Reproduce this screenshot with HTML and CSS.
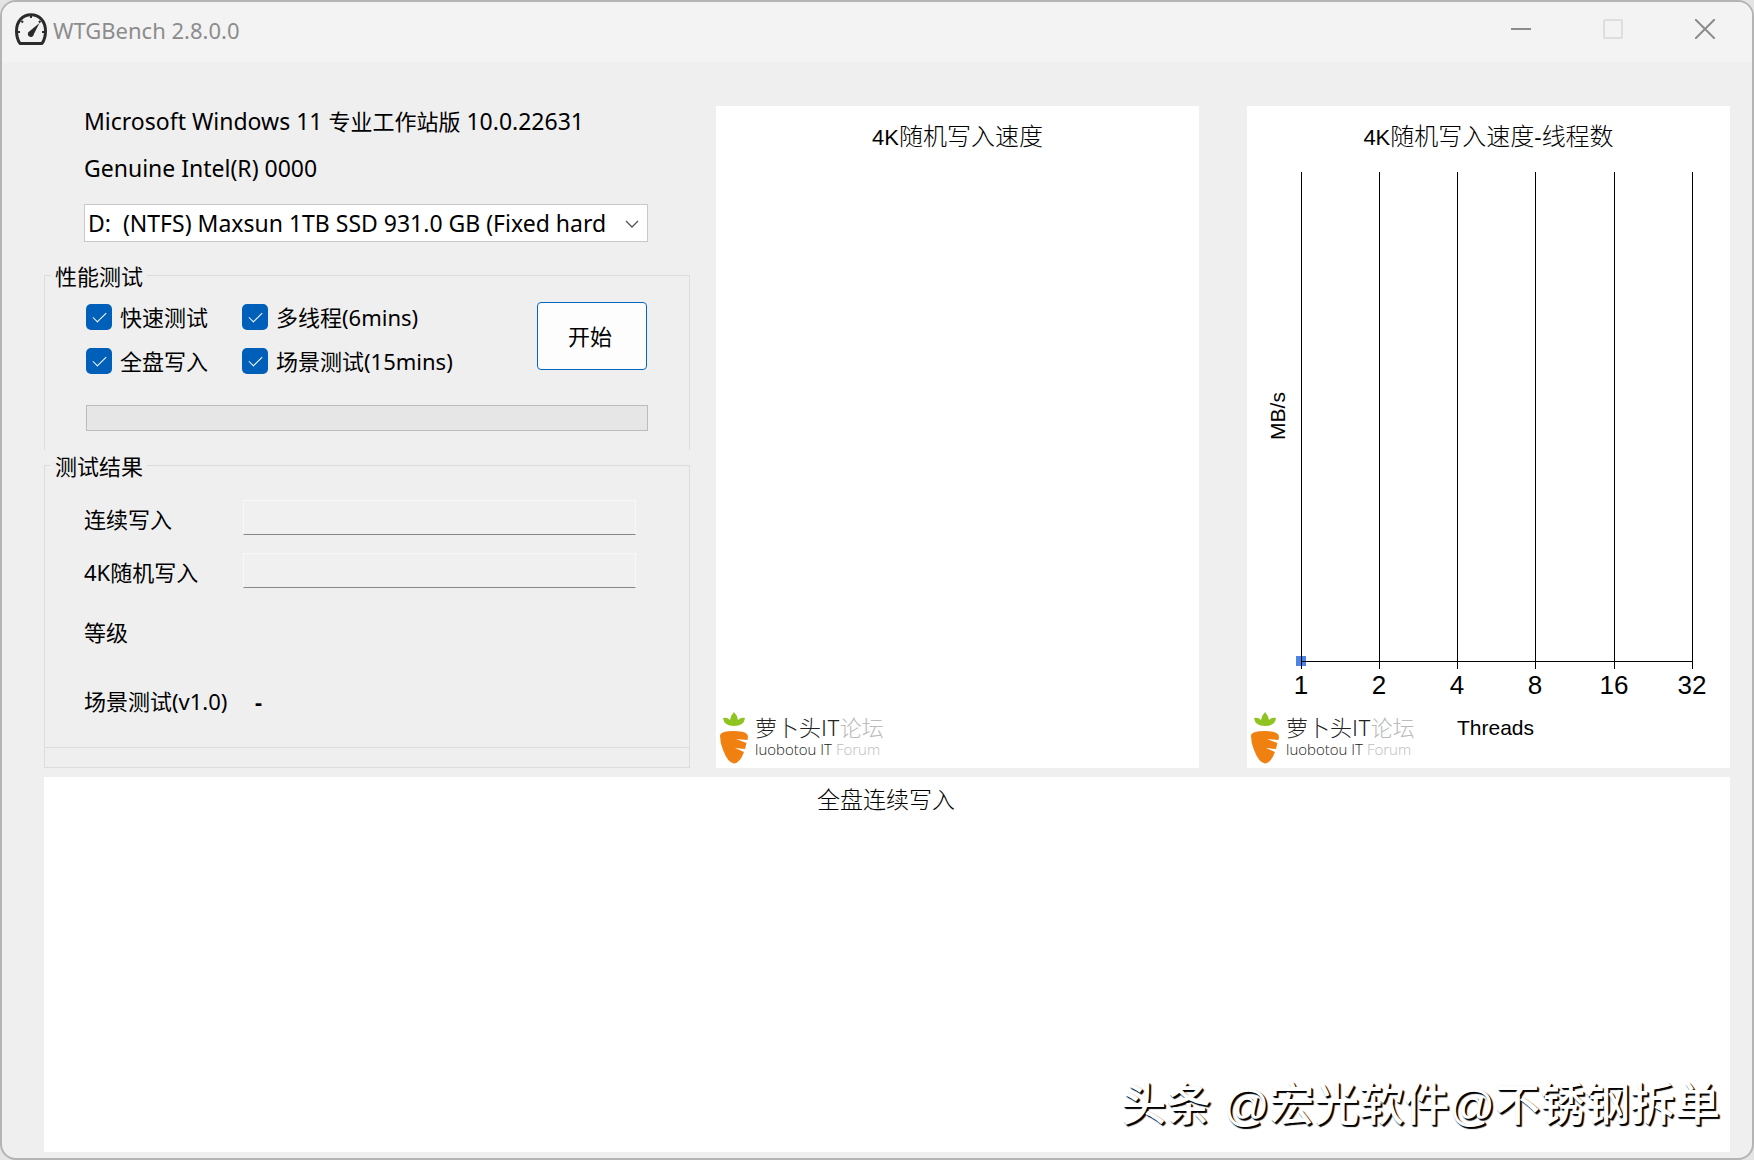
FILE: index.html
```html
<!DOCTYPE html>
<html lang="zh-CN">
<head>
<meta charset="utf-8">
<title>WTGBench 2.8.0.0</title>
<link rel="stylesheet" href="styles.css">
</head>
<body>
<div class="window">
  <header class="titlebar">
    <svg class="app-icon" viewBox="0 0 32 34" aria-hidden="true">
      <path d="M5 30.500C2.500 27 1.500 23 1.500 18C1.500 8.500 7.500 1.800 16 1.800S30.500 8.500 30.500 18C30.500 23 29.500 27 27 30.500Z" fill="none" stroke="#2b2b2b" stroke-width="3" stroke-linejoin="round"/>
      <path d="M16 3v2M6.500 8l1.500 1.500M25.500 8l-1.500 1.500M3 19h2M27 19h2" stroke="#2b2b2b" stroke-width="2"/>
      <path d="M24.500 10L18.800 21.300A3 3 0 1 1 14.200 18.500Z" fill="#2b2b2b"/>
    </svg>
    <h1 class="app-title">WTGBench 2.8.0.0</h1>
    <div class="window-buttons">
      <button class="window-button" aria-label="最小化"><svg viewBox="0 0 20 20"><path d="M0 10h20" stroke="#8c8c8c" stroke-width="2"/></svg></button>
      <button class="window-button" aria-label="最大化" disabled><svg viewBox="0 0 20 20"><rect x="1" y="1" width="18" height="18" rx="1" fill="none" stroke="#dedede" stroke-width="2"/></svg></button>
      <button class="window-button" aria-label="关闭"><svg viewBox="0 0 20 20"><path d="M0 0L20 20M20 0L0 20" stroke="#8c8c8c" stroke-width="2"/></svg></button>
    </div>
  </header>

  <main class="content">
    <div class="top">
      <section class="controls">
        <p class="info">Microsoft Windows 11 <span class="edition">专业工作站版</span> 10.0.22631</p>
        <p class="info">Genuine Intel(R) 0000</p>
        <div class="drive">
          <select class="drive-select" aria-label="磁盘">
            <option>D:&nbsp; (NTFS) Maxsun 1TB SSD 931.0 GB (Fixed hard</option>
          </select>
          <svg class="drive-arrow" viewBox="0 0 14 8" aria-hidden="true"><path d="M1 1l6 6l6-6" fill="none" stroke="#555" stroke-width="1.300"/></svg>
        </div>

        <fieldset class="group group-tests">
          <legend>性能测试</legend>
          <div class="group-body">
            <div class="tests">
              <div class="checks">
                <label class="check"><input type="checkbox" checked>快速测试</label>
                <label class="check"><input type="checkbox" checked>多线程(6mins)</label>
                <label class="check"><input type="checkbox" checked>全盘写入</label>
                <label class="check"><input type="checkbox" checked>场景测试(15mins)</label>
              </div>
              <button class="start">开始</button>
            </div>
            <div class="progress" role="progressbar" aria-label="进度" aria-valuenow="0"></div>
          </div>
        </fieldset>

        <fieldset class="group">
          <legend>测试结果</legend>
          <div class="results">
            <div class="result">
              <label for="seq">连续写入</label>
              <input class="field" id="seq" type="text" readonly>
            </div>
            <div class="result">
              <label for="rnd">4K随机写入</label>
              <input class="field" id="rnd" type="text" readonly>
            </div>
            <div class="result result-level"><span>等级</span></div>
            <div class="result result-scene"><span>场景测试(v1.0)</span><span class="score">-</span></div>
          </div>
          <div class="group-foot"></div>
        </fieldset>
      </section>

      <section class="chart">
        <h2 class="chart-title"><span class="latin">4K</span>随机写入速度</h2>
        <div class="chart-foot">
          <div class="brand">
            <svg class="carrot" viewBox="0 0 28 52" aria-hidden="true">
              <path d="M3 6Q7 5 10 8Q11 3 14 0Q17 3 18 8Q21 5 25 6Q24 14 14 14Q4 14 3 6Z" fill="#8fc31f"/>
              <path d="M0 24Q0 19 14 19Q28 19 28 25L27.500 28L16 27L26.500 31L25 37L15 36L24 40Q20 51 14 51.500Q8 51 3 38Q0 31 0 24Z" fill="#f08010"/>
            </svg>
            <div class="brand-text">
              <div class="brand-name">萝卜头IT<span>论坛</span></div>
              <div class="brand-sub">luobotou IT <span>Forum</span></div>
            </div>
          </div>
        </div>
      </section>

      <section class="chart">
        <h2 class="chart-title"><span class="latin">4K</span>随机写入速度<span class="latin">-</span>线程数</h2>
        <svg class="plot" viewBox="0 0 483 540" role="img" aria-label="4K随机写入速度-线程数">
          <rect x="49" y="492" width="10" height="10" fill="#4a86e8"/>
          <path d="M54.500 8V505M132.500 8V505M210.500 8V505M288.500 8V505M367.500 8V505M445.500 8V505M54 497.500H446" stroke="#000" fill="none"/>
          <g class="ticks">
            <text x="54" y="530">1</text>
            <text x="132" y="530">2</text>
            <text x="210" y="530">4</text>
            <text x="288" y="530">8</text>
            <text x="367" y="530">16</text>
            <text x="445" y="530">32</text>
          </g>
          <text class="axis" transform="translate(38 252) rotate(-90)">MB/s</text>
        </svg>
        <div class="chart-foot">
          <div class="brand">
            <svg class="carrot" viewBox="0 0 28 52" aria-hidden="true">
              <path d="M3 6Q7 5 10 8Q11 3 14 0Q17 3 18 8Q21 5 25 6Q24 14 14 14Q4 14 3 6Z" fill="#8fc31f"/>
              <path d="M0 24Q0 19 14 19Q28 19 28 25L27.500 28L16 27L26.500 31L25 37L15 36L24 40Q20 51 14 51.500Q8 51 3 38Q0 31 0 24Z" fill="#f08010"/>
            </svg>
            <div class="brand-text">
              <div class="brand-name">萝卜头IT<span>论坛</span></div>
              <div class="brand-sub">luobotou IT <span>Forum</span></div>
            </div>
          </div>
          <div class="axis-x">Threads</div>
        </div>
      </section>
    </div>

    <section class="disk">
      <h2 class="disk-title">全盘连续写入</h2>
      <p class="watermark">头条 @宏光软件@不锈钢拆单</p>
    </section>
  </main>
</div>
</body>
</html>
```
FILE: styles.css
```css
* {
  box-sizing: border-box;
}

body {
  margin: 0;
  background: #e4e4e4;
  color: #000;
  font: 22px/32px "Noto Sans", "Noto Sans CJK SC", sans-serif;
}

h1, h2, p {
  margin: 0;
  font-weight: 400;
}

button, input, select {
  font: inherit;
  color: inherit;
}

.window {
  display: flex;
  flex-direction: column;
  min-height: 100vh;
  border: 2px solid #b4b4b4;
  border-radius: 16px;
  background: #efefef;
  overflow: hidden;
}

.titlebar {
  display: flex;
  align-items: center;
  height: 60px;
  padding: 0 1px 4px 13px;
  background: #f3f3f3;
}

.app-icon {
  width: 32px;
  height: 34px;
}

.app-title {
  margin-left: 6px;
  color: #8c8c8c;
  font-size: 22px;
}

.window-buttons {
  display: flex;
  margin-left: auto;
}

.window-button {
  display: flex;
  justify-content: center;
  align-items: center;
  width: 92px;
  height: 56px;
  padding: 0 0 2px;
  border: 0;
  background: none;
}

.window-button svg {
  width: 20px;
  height: 20px;
}

.content {
  display: flex;
  flex: 1;
  flex-direction: column;
  gap: 9px;
  padding: 43px 22px 6px 42px;
}

.top {
  display: flex;
}

.controls {
  flex: 0 0 646px;
  min-width: 0;
}

.info {
  height: 32px;
  margin: 0 0 15px 40px;
  font-size: 23px;
}

.edition {
  font-size: 22px;
}

.drive {
  position: relative;
  margin: 20px 42px 18px 40px;
}

.drive-select {
  display: block;
  width: 100%;
  height: 38px;
  padding: 0 30px 0 3px;
  border: 1px solid #c8c8c8;
  border-radius: 0;
  background: #fff;
  font-size: 23px;
  appearance: none;
}

.drive-arrow {
  position: absolute;
  top: 16px;
  right: 9px;
  width: 14px;
  height: 8px;
  pointer-events: none;
}

.group {
  min-width: 0;
  margin: 0;
  padding: 0;
  border: 1px solid #dcdcdc;
}

.group legend {
  height: 30px;
  margin-left: 6px;
  padding: 0 4px;
}

.group-tests {
  border-bottom: 0;
}

.group-body {
  padding: 12px 41px 19px;
}

.tests {
  display: flex;
  justify-content: space-between;
  padding-right: 1px;
}

.checks {
  display: grid;
  grid-template-columns: 156px auto;
  gap: 18px 0;
  margin-top: 2px;
}

.check {
  display: flex;
  gap: 8px;
  align-items: center;
  height: 26px;
  white-space: nowrap;
}

.check input {
  display: grid;
  place-items: center;
  width: 26px;
  height: 26px;
  margin: 0;
  border-radius: 5px;
  background: #005fb8;
  appearance: none;
}

.check input::before {
  content: "";
  width: 12px;
  height: 6px;
  margin-bottom: 4px;
  border: solid #fff;
  border-width: 0 0 1px 1px;
  transform: rotate(-45deg);
}

.start {
  width: 110px;
  height: 68px;
  padding: 0 4px 0 0;
  border: 1px solid #0067c0;
  border-radius: 4px;
  background: #fdfdfd;
}

.progress {
  height: 26px;
  margin-top: 31px;
  border: 1px solid #bcbcbc;
  background: #e6e6e6;
}

.results {
  padding: 20px 53px 30px 39px;
}

.result {
  display: grid;
  grid-template-columns: 159px 1fr;
  align-items: center;
  height: 35px;
  margin-bottom: 18px;
}

.result label {
  padding-top: 2px;
}

.field {
  width: 100%;
  height: 35px;
  border: 1px solid #f8f8f8;
  border-bottom-color: #868686;
  background: #f0f0f0;
}

.result-level,
.result-scene {
  height: 32px;
}

.result-level {
  margin-top: 28px;
  margin-bottom: 37px;
}

.result-scene {
  margin-bottom: 0;
}

.score {
  padding-left: 12px;
  font-weight: 700;
}

.group-foot {
  height: 20px;
  border-top: 1px solid #dcdcdc;
}

.chart {
  display: flex;
  flex: 1;
  flex-direction: column;
  margin: 1px 0 0 48px;
  background: #fff;
}

.controls + .chart {
  margin-left: 26px;
}

.chart-title,
.disk-title {
  font: 300 23px/32px "Noto Sans CJK SC", sans-serif;
  text-align: center;
}

.chart-title {
  height: 58px;
  padding-top: 13px;
  font-size: 24px;
}

.latin {
  font-family: "Liberation Sans", sans-serif;
  font-size: 22px;
  font-weight: 400;
}

.plot {
  width: 100%;
}

.ticks {
  font: 26px "Liberation Sans", sans-serif;
  text-anchor: middle;
}

.axis,
.axis-x {
  font: 21px/32px "Liberation Sans", sans-serif;
  text-anchor: middle;
}

.chart-foot {
  display: flex;
  margin-top: auto;
  padding: 0 4px 4px;
}

.brand {
  display: flex;
  flex: 0 0 206px;
  gap: 7px;
}

.carrot {
  width: 28px;
  height: 52px;
}

.brand-text {
  padding-top: 2px;
  color: #222;
  font-family: "Noto Sans CJK SC", sans-serif;
  font-weight: 300;
  white-space: nowrap;
}

.brand-text span {
  color: #bbb;
}

.brand-name {
  font-size: 22px;
  line-height: 25px;
}

.brand-sub {
  font-family: "Open Sans", sans-serif;
  font-size: 15px;
  line-height: 20px;
}

.disk {
  display: flex;
  flex: 1;
  flex-direction: column;
  justify-content: space-between;
  min-height: 375px;
  background: #fff;
}

.disk-title {
  padding: 5px 2px 0 0;
}

.watermark {
  padding: 0 10px 18px;
  color: #fff;
  font: 500 45px/56px "Liberation Sans", "Noto Sans CJK SC", sans-serif;
  text-align: right;
  text-shadow: 2px 2px 1px #000, 1px 1px 1px #000;
}
```
